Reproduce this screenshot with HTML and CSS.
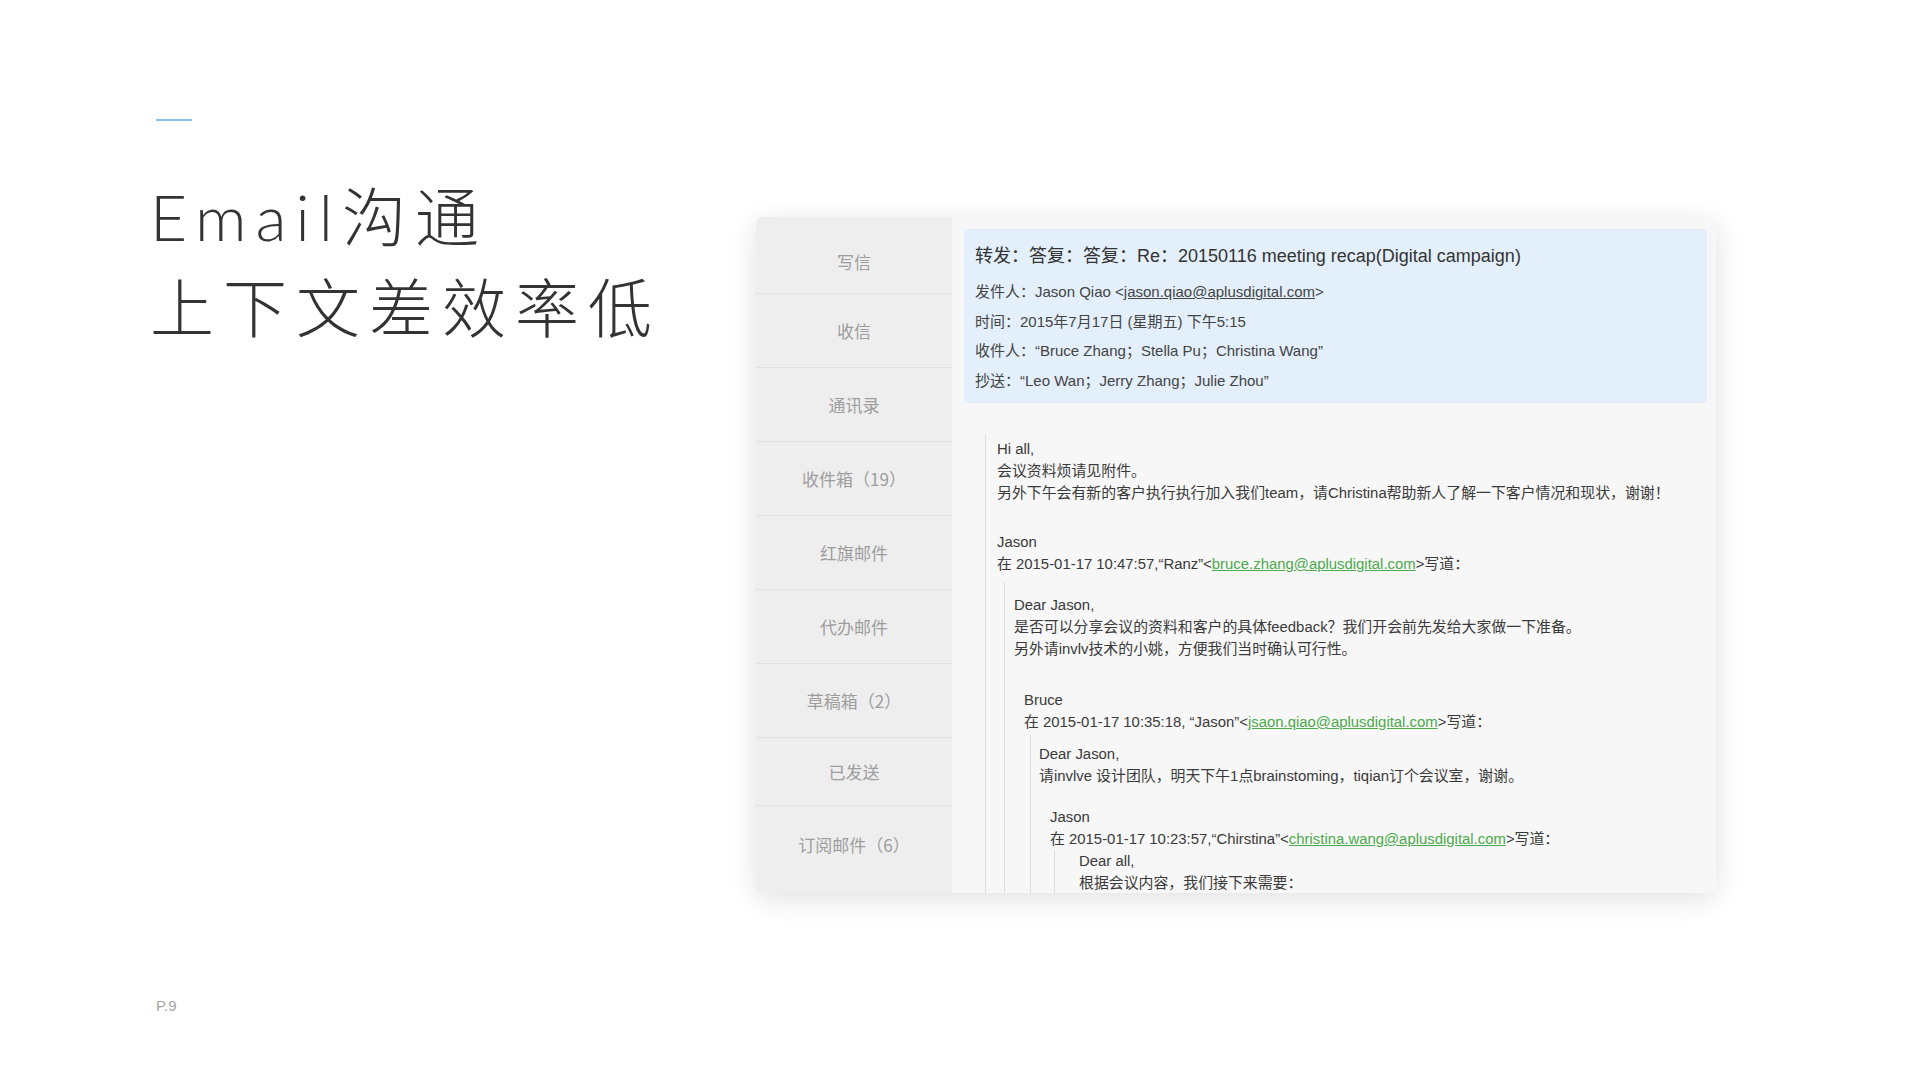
FILE: index.html
```html
<!DOCTYPE html>
<html lang="zh-CN">
<head>
    <meta charset="UTF-8">
    <meta name="viewport" content="width=device-width, initial-scale=1.0">
    <title>Email沟通</title>
    <link rel="stylesheet" href="styles.css">
</head>
<body>
    <div class="slide">
        <div class="intro">
            <span class="accent"></span>
            <h1 class="title">Email沟通<br>上下文差效率低</h1>
            <div class="page-no">P.9</div>
        </div>

        <div class="mail">
            <ul class="folders">
                <li>写信</li>
                <li>收信</li>
                <li>通讯录</li>
                <li>收件箱（19）</li>
                <li>红旗邮件</li>
                <li>代办邮件</li>
                <li>草稿箱（2）</li>
                <li>已发送</li>
                <li>订阅邮件（6）</li>
            </ul>

            <div class="reader">
                <div class="mail-head">
                    <div class="subject">转发：答复：答复：Re：20150116 meeting recap(Digital campaign)</div>
                    <div class="meta">发件人：Jason Qiao &lt;<a class="head-link">jason.qiao@aplusdigital.com</a>&gt;</div>
                    <div class="meta">时间：2015年7月17日 (星期五) 下午5:15</div>
                    <div class="meta">收件人：“Bruce Zhang；Stella Pu；Christina Wang”</div>
                    <div class="meta">抄送：“Leo Wan；Jerry Zhang；Julie Zhou”</div>
                </div>

                <div class="mail-body">
                    <blockquote class="quote q1">
                        <p>Hi all,<br>会议资料烦请见附件。<br>另外下午会有新的客户执行执行加入我们team，请Christina帮助新人了解一下客户情况和现状，谢谢！</p>
                        <p class="sign s1">Jason<br>在 2015-01-17 10:47:57,“Ranz”&lt;<a class="mail-link">bruce.zhang@aplusdigital.com</a>&gt;写道：</p>

                        <blockquote class="quote q2">
                            <p>Dear Jason,<br>是否可以分享会议的资料和客户的具体feedback？我们开会前先发给大家做一下准备。<br>另外请invlv技术的小姚，方便我们当时确认可行性。</p>
                            <p class="sign s2">Bruce<br>在 2015-01-17 10:35:18, “Jason”&lt;<a class="mail-link">jsaon.qiao@aplusdigital.com</a>&gt;写道：</p>

                            <blockquote class="quote q3">
                                <p>Dear Jason,<br>请invlve 设计团队，明天下午1点brainstoming，tiqian订个会议室，谢谢。</p>
                                <p class="sign s3">Jason<br>在 2015-01-17 10:23:57,“Chirstina”&lt;<a class="mail-link">christina.wang@aplusdigital.com</a>&gt;写道：</p>

                                <blockquote class="quote q4">
                                    <p>Dear all,<br>根据会议内容，我们接下来需要：</p>
                                </blockquote>
                            </blockquote>
                        </blockquote>
                    </blockquote>
                </div>
            </div>
        </div>
    </div>
</body>
</html>
```

FILE: styles.css
```css
body {
    margin: 0;
    background: #fff;
    font-family: "Liberation Sans", "Noto Sans CJK SC", sans-serif;
    color: #333;
}
.slide {
    width: 1920px;
    height: 1080px;
    display: grid;
    grid-template-columns: 756px 960px;
}
.intro {
    display: flex;
    flex-direction: column;
    align-items: flex-start;
    padding: 119px 0 66px 156px;
}
.accent {
    width: 36px;
    height: 2px;
    background: #86bff3;
}
.title {
    margin: 50px 0 0 -6px;
    font-family: Lato, "Noto Sans CJK SC", sans-serif;
    font-size: 64px;
    font-weight: 300;
    line-height: 91px;
    letter-spacing: 9px;
    color: #333;
}
.page-no {
    margin-top: auto;
    font-size: 15px;
    color: #a6a6a6;
}

/* mail window */
.mail {
    margin-top: 217px;
    height: 676px;
    display: flex;
    border-radius: 8px;
    overflow: hidden;
    background: #f7f7f7;
    box-shadow: 0 6px 28px rgba(0, 0, 0, 0.12);
}
.folders {
    width: 196px;
    flex-shrink: 0;
    margin: 0;
    padding: 0;
    list-style: none;
    background: #eeeeee;
    display: flex;
    flex-direction: column;
}
.folders li {
    height: 73px;
    flex-shrink: 0;
    display: flex;
    align-items: center;
    justify-content: center;
    border-bottom: 1px solid #e1e1e1;
    font-family: "Noto Sans CJK SC", sans-serif;
    font-size: 17px;
    color: #9d9d9d;
}
.folders li:first-child {
    height: 64px;
    padding-top: 12px;
}
.folders li:nth-child(8) {
    height: 67px;
}
.folders li:last-child {
    flex: 1;
    padding-bottom: 10px;
    border-bottom: none;
}
.reader {
    flex: 1;
    min-width: 0;
    padding: 12px 9px 0 12px;
    overflow: hidden;
}
.mail-head {
    background: #e3effa;
    border-radius: 3px;
    padding: 13px 12px 8px 11px;
}
.subject {
    font-size: 18px;
    line-height: 28px;
    color: #333;
    margin-bottom: 7px;
}
.meta {
    font-size: 15px;
    line-height: 29.5px;
    color: #444;
}
.head-link {
    color: #444;
    text-decoration: underline;
}

/* quoted body */
.mail-body {
    margin: 32px 0 0 21px;
    font-size: 14.9px;
    line-height: 22px;
    color: #3a3a3a;
}
.mail-body p {
    margin: 0;
}
.quote {
    margin: 0;
    border-left: 1px solid #dcdcdc;
}
.q1 {
    padding: 3px 0 0 11px;
}
.q2 {
    margin: 7px 0 0 7px;
    padding: 12px 0 0 9px;
}
.q3 {
    margin: 2px 0 0 16px;
    padding: 8px 0 0 8px;
}
.q4 {
    margin: 0 0 0 15px;
    padding: 0 0 300px 24px;
}
.s1 {
    margin-top: 27px !important;
}
.s2 {
    margin-top: 29px !important;
    padding-left: 10px;
}
.s3 {
    margin-top: 19px !important;
    padding-left: 11px;
}
.mail-link {
    color: #4caa4c;
    text-decoration: underline;
}
```
